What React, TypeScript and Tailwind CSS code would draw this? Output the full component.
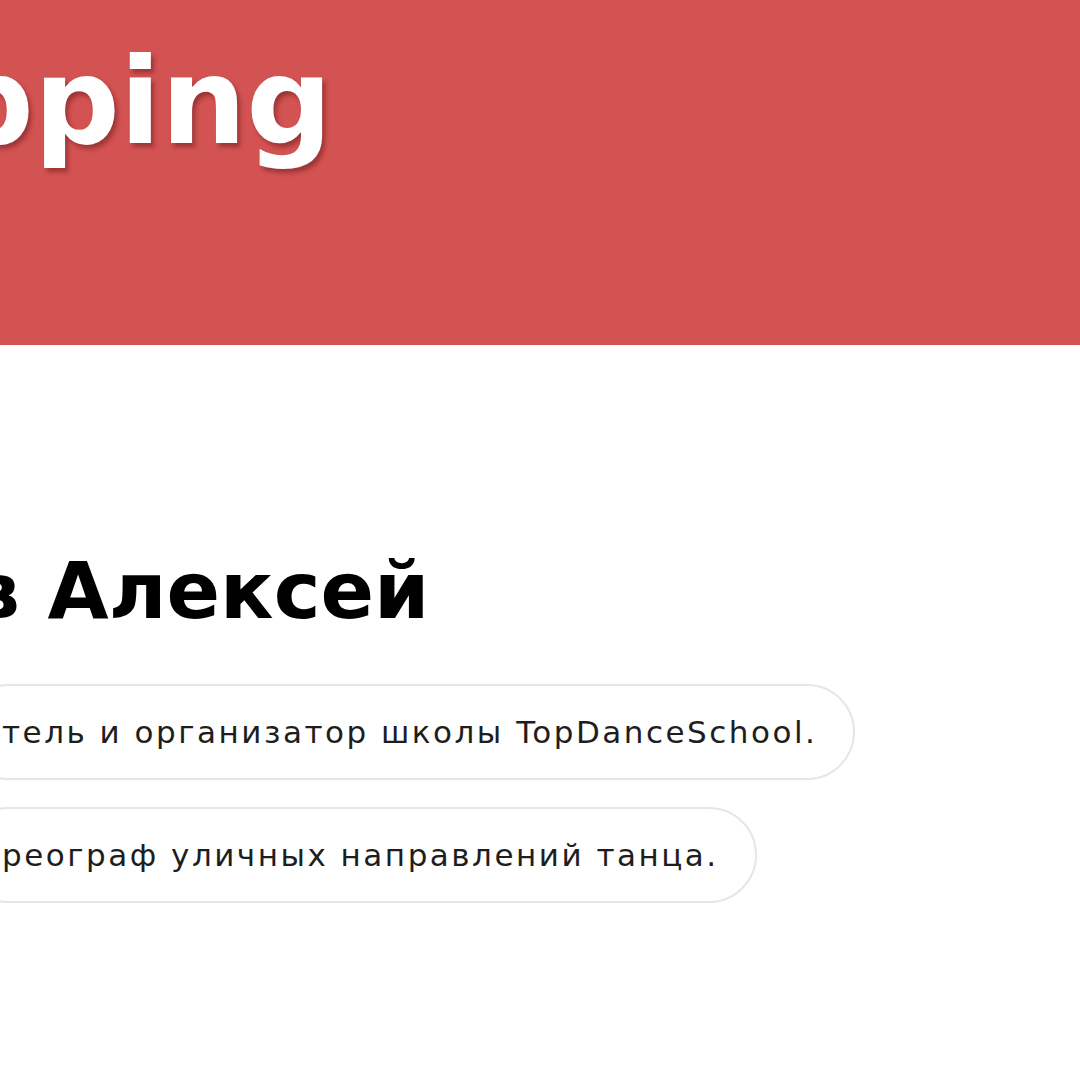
export default function App() {
  return (
    <div className="w-[1080px] h-[1080px] overflow-hidden bg-white font-['DejaVu_Sans',sans-serif]">
      <header className="h-[345px] bg-[#d35252] overflow-hidden pt-[42px]">
        <h1 className="-ml-[52px] whitespace-nowrap text-[120px] font-bold leading-none text-white [text-shadow:3px_4px_4px_rgba(90,20,20,0.45)]">
          pping
        </h1>
      </header>
      <section className="pt-[207px]">
        <h2 className="-ml-[30px] whitespace-nowrap text-[79px] font-bold leading-none text-black">
          в Алексей
        </h2>
        <div className="mt-[53px] flex flex-col items-start gap-[27px]">
          <div className="-ml-[40px] flex h-[96px] items-center rounded-full border-2 border-[#e6e6e6] pl-[40px] pr-[36px] text-[31px] tracking-[2.5px] whitespace-nowrap text-[#1e1e1e]">
            тель и организатор школы TopDanceSchool.
          </div>
          <div className="-ml-[40px] flex h-[96px] items-center rounded-full border-2 border-[#e6e6e6] pl-[40px] pr-[36px] text-[31px] tracking-[2.5px] whitespace-nowrap text-[#1e1e1e]">
            реограф уличных направлений танца.
          </div>
        </div>
      </section>
    </div>
  );
}
